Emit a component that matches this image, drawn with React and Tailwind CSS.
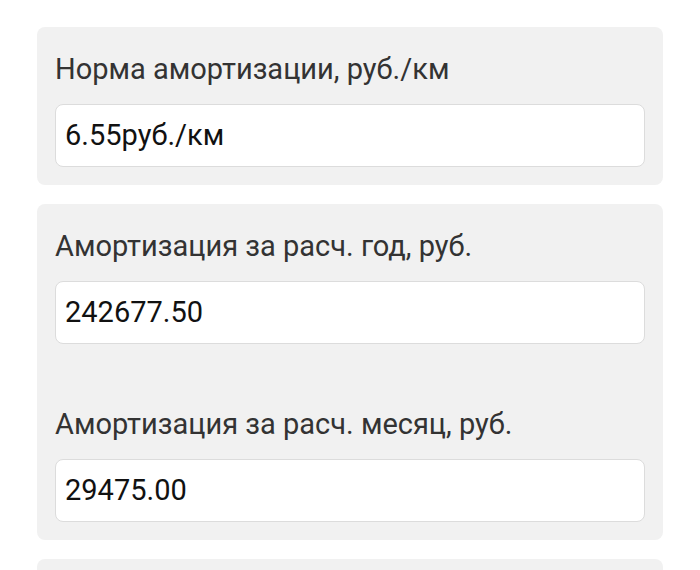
const GROUPS = [
  [{ label: 'Норма амортизации, руб./км', value: '6.55руб./км' }],
  [
    { label: 'Амортизация за расч. год, руб.', value: '242677.50' },
    { label: 'Амортизация за расч. месяц, руб.', value: '29475.00' },
  ],
]

function Field({ label, value }) {
  return (
    <div>
      <div className="h-10 leading-10 text-[29px] text-[#333333] whitespace-nowrap">{label}</div>
      <div className="mt-[15px] h-[63px] flex items-center px-[9px] bg-white border border-[#dcdcdc] rounded-lg text-[29px] text-[#111111]">
        {value}
      </div>
    </div>
  )
}

export default function App() {
  return (
    <div className="w-[700px] h-[570px] overflow-hidden bg-white pt-[27px] px-[37px]" style={{ fontFamily: 'Roboto, "Noto Sans", sans-serif' }}>
      <div className="flex flex-col gap-[19px]">
        {GROUPS.map((fields, i) => (
          <div key={i} className="bg-[#f1f1f1] rounded-lg pt-[22px] pb-[18px] px-[18px] flex flex-col gap-[60px]">
            {fields.map((f) => (
              <Field key={f.label} {...f} />
            ))}
          </div>
        ))}
        <div className="bg-[#f1f1f1] rounded-lg h-[60px]" />
      </div>
    </div>
  )
}
